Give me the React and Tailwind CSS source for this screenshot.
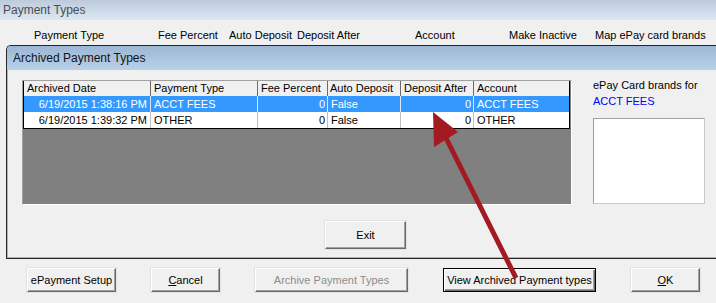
import React from "react";

function Btn({ children, className = "", disabled = false, focused = false }) {
  if (focused) {
    return (
      <div className={"flex items-center justify-center bg-[#f0f0f0] border border-black shadow-[inset_1px_1px_0_#ffffff,inset_-1px_-1px_0_#696969,inset_-2px_-2px_0_#a0a0a0] " + className}>
        {children}
      </div>
    );
  }
  return (
    <div
      className={
        "flex items-center justify-center bg-[#f0f0f0] border-t border-l border-t-[#ffffff] border-l-[#ffffff] border-b border-r border-b-[#696969] border-r-[#696969] shadow-[inset_-1px_-1px_0_#a0a0a0,0_0_0_1px_#e3e3e3] " +
        (disabled ? "text-[#8d8d8d] " : "text-black ") +
        className
      }
    >
      {children}
    </div>
  );
}

const rows = [
  { date: "6/19/2015 1:38:16 PM", type: "ACCT FEES", fee: "0", auto: "False", after: "0", acct: "ACCT FEES", sel: true },
  { date: "6/19/2015 1:39:32 PM", type: "OTHER", fee: "0", auto: "False", after: "0", acct: "OTHER", sel: false },
];

function Row({ r }) {
  const bg = r.sel ? "bg-[#3399ff] text-white" : "bg-white text-black";
  const dv = r.sel ? "border-r border-[#d8e8ff]" : "border-r border-[#bdbdbd]";
  return (
    <div className={"flex h-[16px] " + bg}>
      <div className={"w-[127px] flex items-center justify-end pr-[3px] " + dv}>{r.date}</div>
      <div className={"w-[107px] flex items-center pl-[3px] " + dv}>{r.type}</div>
      <div className={"w-[70px] flex items-center justify-end pr-[2px] " + dv}>{r.fee}</div>
      <div className={"w-[73px] flex items-center pl-[3px] " + dv}>{r.auto}</div>
      <div className={"w-[73px] flex items-center justify-end pr-[2px] " + dv}>{r.after}</div>
      <div className="w-[93px] flex items-center pl-[3px]">{r.acct}</div>
    </div>
  );
}

export default function App() {
  return (
    <div className="relative w-[716px] h-[303px] overflow-hidden bg-[#f0f0f0] font-['Liberation_Sans',Arial,sans-serif] text-[11px] leading-[13px] text-black">
      {/* main window title bar */}
      <div className="h-[20px] bg-linear-to-b from-[#bccbdc] to-[#dde8f4] pl-[3px] flex items-center text-[12px] text-[#4d4d4d]">
        Payment Types
      </div>

      {/* main window column headers */}
      <div className="h-[25px] flex pt-[9px] pl-[34px] whitespace-nowrap">
        <span className="w-[124px]">Payment Type</span>
        <span className="w-[71px]">Fee Percent</span>
        <span className="w-[68px]">Auto Deposit</span>
        <span className="w-[118px]">Deposit After</span>
        <span className="w-[94px]">Account</span>
        <span className="w-[86px]">Make Inactive</span>
        <span>Map ePay card brands</span>
      </div>

      {/* dialog */}
      <div className="ml-[6px] w-[720px] h-[214px] flex flex-col border-l border-t border-b border-[#262626] rounded-tl-[5px] overflow-hidden">
        <div className="h-[24px] shrink-0 bg-linear-to-b from-[#9cb7d4] to-[#b9d1ea] flex items-center pl-[6px] text-[12px] text-[#141414]">
          Archived Payment Types
        </div>
        <div className="flex-1 bg-[#f0f0f0] shadow-[inset_1px_-1px_0_#86c0e8] pl-[15px] pt-[10px]">
          <div className="flex items-start">
            {/* grid */}
            <div className="w-[550px] h-[125px] bg-[#808080] border-t border-l border-t-[#a0a0a0] border-l-[#a0a0a0] border-b border-r border-b-[#ffffff] border-r-[#ffffff]">
              <div className="w-[547px] border-l border-r border-b border-black">
                <div className="flex h-[15px] bg-[#f0f0f0]">
                  <div className="w-[127px] flex items-center pl-[3px] border-r border-[#6b6b6b]">Archived Date</div>
                  <div className="w-[107px] flex items-center pl-[3px] border-r border-[#6b6b6b]">Payment Type</div>
                  <div className="w-[70px] flex items-center pl-[3px] border-r border-[#6b6b6b]">Fee Percent</div>
                  <div className="w-[73px] flex items-center pl-[2px] border-r border-[#6b6b6b]">Auto Deposit</div>
                  <div className="w-[73px] flex items-center pl-[3px] border-r border-[#6b6b6b]">Deposit After</div>
                  <div className="w-[93px] flex items-center pl-[3px]">Account</div>
                </div>
                {rows.map((r, i) => (
                  <Row key={i} r={r} />
                ))}
              </div>
            </div>

            {/* right panel */}
            <div className="ml-[21px] -mt-[3px] flex flex-col leading-[16px]">
              <span>ePay Card brands for</span>
              <span className="text-[#0000ff]">ACCT FEES</span>
              <div className="mt-[9px] w-[112px] h-[86px] bg-white border border-[#c8c8c8] border-t-[#a0a0a0] border-l-[#a0a0a0]" />
            </div>
          </div>

          <Btn className="mt-[16px] ml-[303px] w-[81px] h-[28px]">Exit</Btn>
        </div>
      </div>

      {/* bottom buttons */}
      <div className="mt-[9px] pl-[27px] flex gap-[35px] whitespace-nowrap">
        <Btn className="w-[89px] h-[24px]">ePayment Setup</Btn>
        <Btn className="w-[69px] h-[24px]">
          <span>
            <span className="underline underline-offset-1">C</span>ancel
          </span>
        </Btn>
        <Btn className="w-[153px] h-[24px]" disabled>
          Archive Payment Types
        </Btn>
        <Btn className="w-[153px] h-[24px]" focused>
          View Archived Payment types
        </Btn>
        <Btn className="w-[69px] h-[24px]">
          <span>
            <span className="underline underline-offset-1">O</span>K
          </span>
        </Btn>
      </div>

      {/* red annotation arrow */}
      <svg className="absolute left-0 top-0 pointer-events-none" width="716" height="303" viewBox="0 0 716 303">
        <line x1="516" y1="278" x2="446" y2="138" stroke="#a31a22" strokeWidth="5" />
        <polygon points="433,112 458,132 434,147" fill="#a31a22" />
      </svg>
    </div>
  );
}
